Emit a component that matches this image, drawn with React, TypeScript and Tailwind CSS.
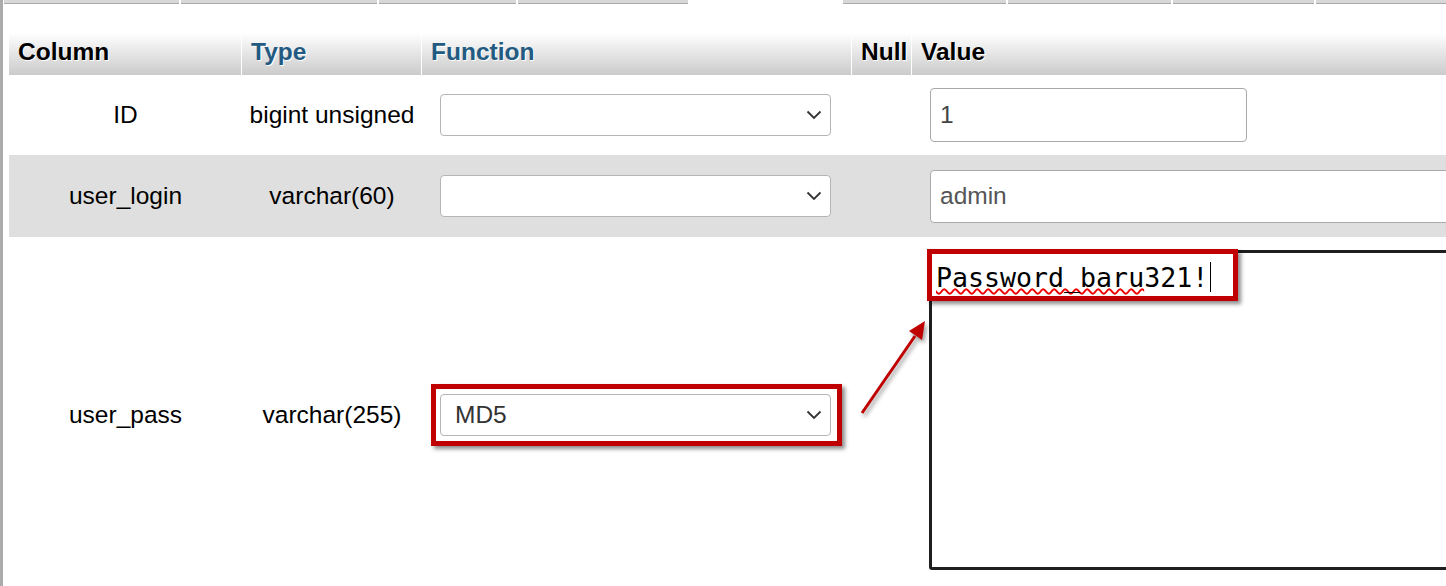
import React from "react";

const tabs: { w: number; on?: boolean }[] = [
    { w: 175 },
    { w: 196 },
    { w: 137 },
    { w: 170 },
    { w: 151, on: true },
    { w: 163 },
    { w: 163 },
    { w: 141 },
    { w: 140 },
];

function Chevron() {
    return (
        <svg width="16" height="10" viewBox="0 0 16 10" className="shrink-0">
            <path d="M1.5 1.5 L8 8 L14.5 1.5" fill="none" stroke="#333" strokeWidth="1.8" />
        </svg>
    );
}

function FuncSelect({ value = "" }: { value?: string }) {
    return (
        <div className="flex h-[42px] w-[391px] items-center justify-between rounded-[4px] border border-[#b5b5b5] bg-white pl-[14px] pr-[8px] text-[#333]">
            <span>{value}</span>
            <Chevron />
        </div>
    );
}

export default function App() {
    const hd = "flex h-full shrink-0 items-center border-r border-white pl-[9px] pb-[4px] font-bold [text-shadow:1px_1px_0_#fff]";

    return (
        <div
            className="relative h-[586px] w-[1446px] overflow-hidden border-l-[3px] border-[#ababab] bg-white text-[24.5px] text-black"
            style={{ fontFamily: '"Liberation Sans", Arial, sans-serif' }}
        >
            {/* Tabs strip */}
            <div className="flex h-[4px] gap-[2px] pl-[1px]">
                {tabs.map((t, i) => (
                    <div
                        key={i}
                        style={{ width: t.w }}
                        className={t.on ? "h-full shrink-0 bg-white" : "h-full shrink-0 border-b border-[#aaa] bg-[#d8d8d8]"}
                    />
                ))}
            </div>

            <div className="ml-[6px] mt-[29px]">
                {/* Header */}
                <div className="flex h-[42px] bg-linear-to-b from-white to-[#cbcbcb]">
                    <div className={`${hd} w-[233px]`}>Column</div>
                    <div className={`${hd} w-[180px] text-[#235a81]`}>Type</div>
                    <div className={`${hd} w-[430px] text-[#235a81]`}>Function</div>
                    <div className={`${hd} w-[60px] pl-[6px]`}>Null</div>
                    <div className={`${hd} flex-1 border-r-0 pl-[8px]`}>Value</div>
                </div>

                {/* ID */}
                <div className="flex h-[80px] items-center">
                    <div className="w-[233px] shrink-0 text-center">ID</div>
                    <div className="w-[180px] shrink-0 text-center">bigint unsigned</div>
                    <div className="w-[430px] shrink-0 pl-[18px]">
                        <FuncSelect />
                    </div>
                    <div className="w-[60px] shrink-0" />
                    <div className="min-w-0 flex-1 pl-[18px]">
                        <div className="flex h-[54px] w-[317px] items-center rounded-[4px] border border-[#aaa] pl-[9px] text-[#444]">
                            1
                        </div>
                    </div>
                </div>

                {/* user_login */}
                <div className="flex h-[82px] items-center bg-[#dfdfdf]">
                    <div className="w-[233px] shrink-0 text-center">user_login</div>
                    <div className="w-[180px] shrink-0 text-center">varchar(60)</div>
                    <div className="w-[430px] shrink-0 pl-[18px]">
                        <FuncSelect />
                    </div>
                    <div className="w-[60px] shrink-0" />
                    <div className="min-w-0 flex-1 pl-[18px]">
                        <div className="flex h-[53px] w-[600px] items-center rounded-[4px] border border-[#aaa] bg-white pl-[9px] text-[#555]">
                            admin
                        </div>
                    </div>
                </div>

                {/* user_pass */}
                <div className="flex h-[356px] items-center">
                    <div className="w-[233px] shrink-0 text-center">user_pass</div>
                    <div className="w-[180px] shrink-0 text-center">varchar(255)</div>
                    <div className="w-[430px] shrink-0 pl-[18px]">
                        <FuncSelect value="MD5" />
                    </div>
                    <div className="w-[60px] shrink-0" />
                    <div className="min-w-0 flex-1 self-start pl-[17px] pt-[13px]">
                        <div
                            className="h-[320px] w-[600px] rounded-[3px] border-[3px] border-[#1e1e1e] pl-[4px] pt-[4px] text-[26.6px] leading-[32px]"
                            style={{ fontFamily: '"DejaVu Sans Mono", "Liberation Mono", monospace' }}
                        >
                            <span className="underline decoration-[#e00] decoration-wavy decoration-[1.5px] underline-offset-[1px]">
                                Password_baru
                            </span>
                            321!
                            <span className="ml-[2px] inline-block h-[30px] w-[1px] translate-y-[5px] bg-black" />
                        </div>
                    </div>
                </div>
            </div>

            {/* Annotation: box around the password */}
            <div className="absolute left-[924px] top-[249px] h-[52px] w-[311px] border-[5px] border-[#c00000] shadow-[3px_3px_4px_rgba(0,0,0,0.45)]" />

            {/* Annotation: box around the MD5 select */}
            <div className="absolute left-[428px] top-[384px] h-[62px] w-[411px] border-[5px] border-[#c00000] shadow-[3px_3px_4px_rgba(0,0,0,0.45)]" />

            {/* Annotation: arrow */}
            <svg
                className="absolute left-[850px] top-[315px] [filter:drop-shadow(2px_3px_2px_rgba(0,0,0,0.4))]"
                width="80"
                height="110"
                viewBox="0 0 80 110"
            >
                <line x1="9" y1="98" x2="62" y2="21" stroke="#c00000" strokeWidth="3" />
                <polygon points="72,6 56,16 69,25" fill="#c00000" />
            </svg>
        </div>
    );
}
